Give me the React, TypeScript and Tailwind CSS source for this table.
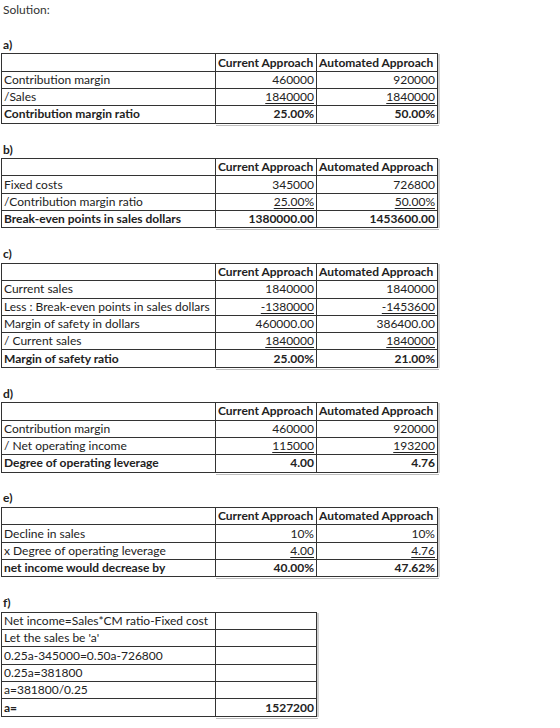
import React from "react";
import clsx from "clsx";

type Row = { l: string; c: string; a: string; u?: boolean; b?: boolean };

const sections: { label: string; rows: Row[] }[] = [
  {
    label: "a)",
    rows: [
      { l: "Contribution margin", c: "460000", a: "920000" },
      { l: "/Sales", c: "1840000", a: "1840000", u: true },
      { l: "Contribution margin ratio", c: "25.00%", a: "50.00%", b: true },
    ],
  },
  {
    label: "b)",
    rows: [
      { l: "Fixed costs", c: "345000", a: "726800" },
      { l: "/Contribution margin ratio", c: "25.00%", a: "50.00%", u: true },
      { l: "Break-even points in sales dollars", c: "1380000.00", a: "1453600.00", b: true },
    ],
  },
  {
    label: "c)",
    rows: [
      { l: "Current sales", c: "1840000", a: "1840000" },
      { l: "Less : Break-even points in sales dollars", c: "-1380000", a: "-1453600", u: true },
      { l: "Margin of safety in dollars", c: "460000.00", a: "386400.00" },
      { l: "/ Current sales", c: "1840000", a: "1840000", u: true },
      { l: "Margin of safety ratio", c: "25.00%", a: "21.00%", b: true },
    ],
  },
  {
    label: "d)",
    rows: [
      { l: "Contribution margin", c: "460000", a: "920000" },
      { l: "/ Net operating income", c: "115000", a: "193200", u: true },
      { l: "Degree of operating leverage", c: "4.00", a: "4.76", b: true },
    ],
  },
  {
    label: "e)",
    rows: [
      { l: "Decline in sales", c: "10%", a: "10%" },
      { l: "x Degree of operating leverage", c: "4.00", a: "4.76", u: true },
      { l: "net income would decrease by", c: "40.00%", a: "47.62%", b: true },
    ],
  },
];

const steps = [
  "Net income=Sales*CM ratio-Fixed cost",
  "Let the sales be 'a'",
  "0.25a-345000=0.50a-726800",
  "0.25a=381800",
  "a=381800/0.25",
];

const Cell = ({
  children,
  right,
  bold,
  under,
  edge,
}: {
  children?: React.ReactNode;
  right?: boolean;
  bold?: boolean;
  under?: boolean;
  edge?: boolean;
}) => (
  <div
    className={clsx(
      "h-[17.3px] px-[2px] flex items-center whitespace-nowrap overflow-hidden border-r border-b border-[#333]",
      right && "justify-end",
      bold && "font-bold",
      edge && "shadow-[2px_0_0_#cfcfcf]"
    )}
  >
    <span className={clsx(under && "underline underline-offset-2 decoration-1")}>{children}</span>
  </div>
);

const Label = ({ text }: { text: string }) => (
  <div className="h-[17.3px] px-[3px] flex items-center font-bold">{text}</div>
);

export default function App() {
  return (
    <div className="w-[560px] min-h-[728px] bg-white pt-[1.5px] text-[12px] text-[#222] font-['Lato',sans-serif]">
      <div className="h-[17.3px] px-[3px] flex items-center text-[#333]">Solution:</div>

      {sections.map((s) => (
        <div key={s.label} className="mt-[17.3px]">
          <Label text={s.label} />
          <div className="ml-px w-[437px] grid grid-cols-[214px_101px_121px] border-l border-t border-[#333]">
            <Cell />
            <Cell bold>Current Approach</Cell>
            <Cell bold edge>Automated Approach</Cell>
            {s.rows.map((r) => (
              <React.Fragment key={r.l}>
                <Cell bold={r.b}>{r.l}</Cell>
                <Cell right bold={r.b} under={r.u}>
                  {r.c}
                </Cell>
                <Cell right bold={r.b} under={r.u} edge>
                  {r.a}
                </Cell>
              </React.Fragment>
            ))}
          </div>
          <div className="ml-[216px] w-[223px] h-[2px] -mb-[2px] border-b border-[#bdbdbd]" />
        </div>
      ))}

      <div className="mt-[17.3px]">
        <Label text="f)" />
        <div className="ml-px w-[316px] grid grid-cols-[214px_101px] border-l border-t border-[#333]">
          {steps.map((t) => (
            <React.Fragment key={t}>
              <Cell>{t}</Cell>
              <Cell edge />
            </React.Fragment>
          ))}
          <Cell bold>a=</Cell>
          <Cell right bold edge>
            1527200
          </Cell>
        </div>
        <div className="ml-[216px] w-[102px] h-[2px] -mb-[2px] border-b border-[#bdbdbd]" />
      </div>
    </div>
  );
}
